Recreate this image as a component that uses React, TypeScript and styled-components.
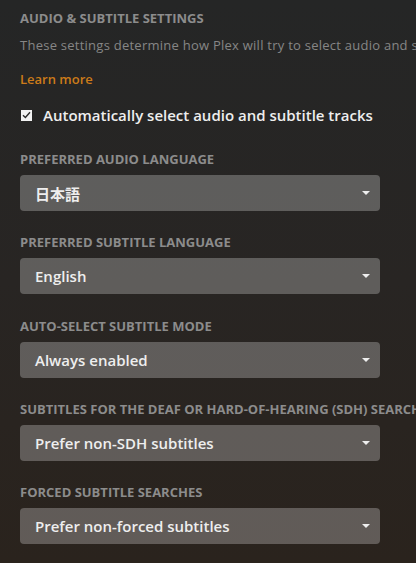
import React from "react";
import styled, { createGlobalStyle } from "styled-components";

const Global = createGlobalStyle`
  html, body {
    margin: 0;
    padding: 0;
    height: 100%;
  }
  body {
    background: linear-gradient(180deg, #252626 0%, #282523 50%, #2a231d 100%);
    font-family: "Open Sans", "Noto Sans CJK JP", sans-serif;
    overflow: hidden;
  }
`;

const Page = styled.div`
  width: 416px;
  height: 563px;
  box-sizing: border-box;
  padding: 9px 0 0 20px;
  display: flex;
  flex-direction: column;
  overflow: hidden;
`;

const Heading = styled.h2`
  margin: 0;
  font-size: 13px;
  line-height: 18px;
  font-weight: 700;
  color: #8c8c8c;
  text-transform: uppercase;
  white-space: nowrap;
`;

const Description = styled.p`
  margin: 9px 0 0;
  font-size: 13px;
  line-height: 18px;
  font-weight: 400;
  letter-spacing: 0.25px;
  color: #868686;
  white-space: nowrap;
`;

const LearnMore = styled.a`
  margin-top: 16px;
  font-size: 13px;
  line-height: 18px;
  font-weight: 600;
  color: #cc7b19;
  text-decoration: none;
  align-self: flex-start;
`;

const CheckRow = styled.label`
  margin-top: 17px;
  display: flex;
  align-items: center;
  gap: 11px;
  padding-left: 1px;
  font-size: 15px;
  line-height: 20px;
  font-weight: 600;
  color: #eeeeee;
`;

const Box = styled.span`
  width: 11px;
  height: 11px;
  background: #f2f2f2;
  display: flex;
  align-items: center;
  justify-content: center;
  flex: none;
`;

const Group = styled.div<{ $first?: boolean }>`
  margin-top: ${(p) => (p.$first ? "25px" : "22.3px")};
  display: flex;
  flex-direction: column;
  gap: 7px;
`;

const Label = styled.div`
  font-size: 13px;
  line-height: 18px;
  font-weight: 700;
  color: #8c8c8c;
  text-transform: uppercase;
  white-space: nowrap;
`;

const Select = styled.div`
  position: relative;
  width: 360px;
  height: 36px;
  box-sizing: border-box;
  border-radius: 4px;
  background: rgba(255, 255, 255, 0.26);
  padding: 0 14px 0 15px;
  display: flex;
  align-items: center;
  font-size: 15px;
  font-weight: 600;
  color: #eeeeee;
`;

const Caret = styled.span`
  position: absolute;
  right: 10px;
  top: 50%;
  margin-top: -2px;
  width: 0;
  height: 0;
  border-left: 4px solid transparent;
  border-right: 4px solid transparent;
  border-top: 4px solid #eeeeee;
`;

const fields = [
  { label: "Preferred Audio Language", value: "日本語" },
  { label: "Preferred Subtitle Language", value: "English" },
  { label: "Auto-Select Subtitle Mode", value: "Always enabled" },
  {
    label: "Subtitles for the deaf or Hard-of-Hearing (SDH) Searches",
    value: "Prefer non-SDH subtitles",
  },
  { label: "Forced Subtitle Searches", value: "Prefer non-forced subtitles" },
];

export default function App() {
  return (
    <>
      <Global />
      <Page>
        <Heading>Audio &amp; Subtitle Settings</Heading>
        <Description>
          These settings determine how Plex will try to select audio and subtitle tracks for you.
        </Description>
        <LearnMore href="#">Learn more</LearnMore>
        <CheckRow>
          <Box>
            <svg width="9" height="8" viewBox="0 0 9 8">
              <path d="M1 4.2 L3.4 6.4 L8 1.2" stroke="#2a2a2a" strokeWidth="1.4" fill="none" />
            </svg>
          </Box>
          Automatically select audio and subtitle tracks
        </CheckRow>
        {fields.map((f, i) => (
          <Group key={f.label} $first={i === 0}>
            <Label>{f.label}</Label>
            <Select>
              {f.value}
              <Caret />
            </Select>
          </Group>
        ))}
      </Page>
    </>
  );
}
